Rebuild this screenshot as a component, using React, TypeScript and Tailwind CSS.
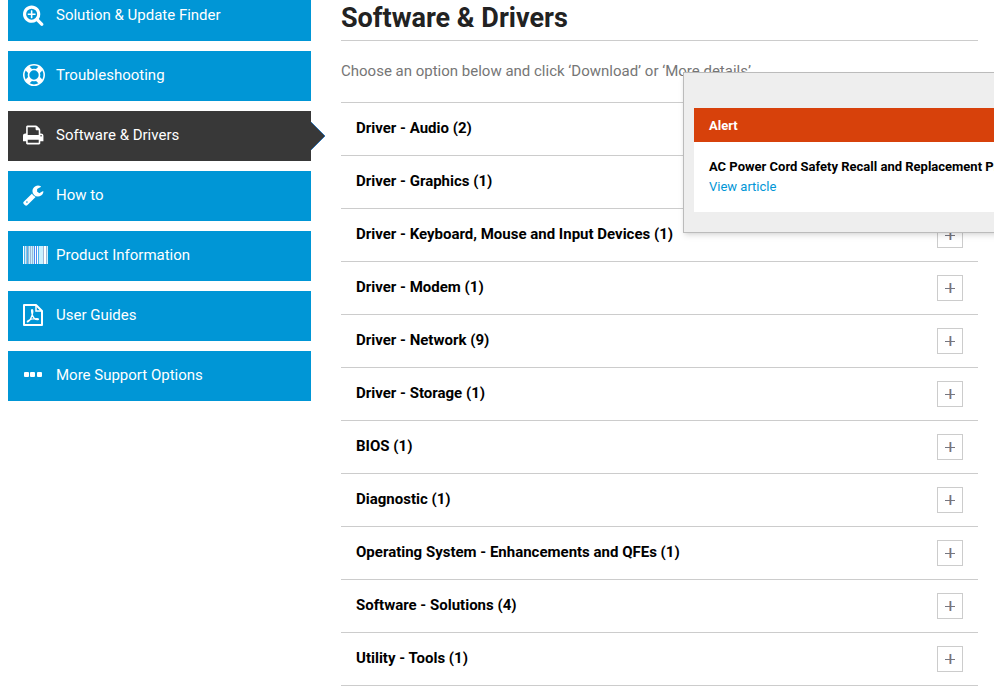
import React, { useState } from "react";

interface IconProps {
  viewBox?: string;
  d: string;
}

const Icon: React.FC<IconProps> = ({ viewBox = "64 0 1792 1792", d }) => (
  <svg viewBox={viewBox} className="size-[22px] fill-current" aria-hidden="true">
    <path d={d} />
  </svg>
);

const SearchPlusIcon = () => (
  <Icon d="M1088 800v64q0 13-9.500 22.500t-22.500 9.500h-224v224q0 13-9.500 22.500t-22.500 9.500h-64q-13 0-22.500-9.500t-9.500-22.500v-224h-224q-13 0-22.500-9.500t-9.500-22.500v-64q0-13 9.500-22.500t22.500-9.500h224v-224q0-13 9.500-22.500t22.500-9.500h64q13 0 22.500 9.500t9.500 22.500v224h224q13 0 22.500 9.500t9.500 22.500zm128 32q0-185-131.500-316.500t-316.500-131.500-316.500 131.500-131.500 316.500 131.500 316.500 316.500 131.500 316.500-131.500 131.500-316.500zm512 832q0 53-37.500 90.500t-90.500 37.500q-54 0-90-38l-343-342q-179 124-399 124-143 0-273.500-55.500t-225-150-150-225-55.500-273.500 55.500-273.500 150-225 225-150 273.500-55.500 273.500 55.500 225 150 150 225 55.500 273.500q0 220-124 399l343 343q37 37 37 90z" />
);

const LifeRingIcon = () => (
  <Icon
    viewBox="0 0 1792 1792"
    d="M896 0q182 0 348 71t286 191 191 286 71 348-71 348-191 286-286 191-348 71-348-71-286-191-191-286-71-348 71-348 191-286 286-191 348-71zm0 128q-190 0-361 90l194 194q82-28 167-28t167 28l194-194q-171-90-361-90zm-678 1129l194-194q-28-82-28-167t28-167l-194-194q-90 171-90 361t90 361zm678 407q190 0 361-90l-194-194q-82 28-167 28t-167-28l-194 194q171 90 361 90zm0-384q159 0 271.500-112.500t112.500-271.500-112.500-271.500-271.500-112.500-271.500 112.500-112.500 271.500 112.500 271.500 271.500 112.500zm484-217l194 194q90-171 90-361t-90-361l-194 194q28 82 28 167t-28 167z"
  />
);

const PrintIcon = () => (
  <Icon d="M448 1536h896v-256h-896v256zm0-640h896v-384h-160q-40 0-68-28t-28-68v-160h-640v640zm1152 64q0-26-19-45t-45-19-45 19-19 45 19 45 45 19 45-19 19-45zm128 0v416q0 13-9.500 22.500t-22.500 9.500h-224v160q0 40-28 68t-68 28h-960q-40 0-68-28t-28-68v-160h-224q-13 0-22.500-9.500t-9.500-22.500v-416q0-79 56.500-135.500t135.500-56.500h64v-544q0-40 28-68t68-28h672q40 0 88 20t76 48l152 152q28 28 48 76t20 88v256h64q79 0 135.500 56.500t56.500 135.500z" />
);

const WrenchIcon = () => (
  <Icon d="M448 1472q0-26-19-45t-45-19-45 19-19 45 19 45 45 19 45-19 19-45zm644-420l-682 682q-37 37-90 37-52 0-91-37l-106-108q-38-36-38-90 0-53 38-91l681-681q39 98 114.500 173.500t173.500 114.500zm634-435q0 39-23 106-47 134-164.500 217.500t-258.500 83.500q-185 0-316.500-131.500t-131.500-316.500 131.500-316.500 316.500-131.500q58 0 121.500 16.500t107.500 46.500q16 11 16 28t-16 28l-293 169v224l193 107q5-3 79-48.500t135.500-81 70.500-35.500q15 0 23.500 10t8.500 25z" />
);

const BarcodeIcon = () => (
  <svg viewBox="0 0 25 18" className="h-[18px] w-[25px]" shapeRendering="crispEdges" aria-hidden="true">
    <path fill="#c9f1ff" d="M0 0h25v18H0z" />
    <path fill="#ffffff" d="M0 0h1v18H0zM12 0h1v18H12zM14 0h1v18H14zM21 0h2v18H21z" />
    <path fill="#9fb9d6" d="M3 0h1v18H3zM5 0h1v18H5zM7 0h1v18H7zM9 0h1v18H9zM20 0h1v18H20zM23 0h1v18H23z" />
    <path fill="#4fb4ee" d="M1 0h1v18H1zM4 0h1v18H4zM15 0h1v18H15z" />
    <path fill="#4f8cf0" d="M11 0h1v18H11zM13 0h1v18H13z" />
  </svg>
);

const PdfIcon = () => (
  <svg viewBox="0 0 20 22" className="h-[22px] w-5" fill="none" stroke="currentColor" aria-hidden="true">
    <path d="M1 1h12l6 6v14H1z" strokeWidth="2" strokeLinejoin="round" />
    <path d="M13 1v6h6" strokeWidth="1.500" />
    <path
      d="M9 5.500c1.200 0 .9 2.500.4 4.500-.8 3-3 7-4.600 7.900-.7.300-.8-.5.200-1.200 2-1.400 5.500-2.200 9-2.200 1.800 0 2 1.200.4 1.200-2.200 0-4.300-2.200-5.200-5.200C8.600 8.500 8.200 5.500 9 5.500z"
      strokeWidth="1.200"
    />
  </svg>
);

const DotsIcon = () => (
  <svg viewBox="0 0 22 22" className="size-[22px] fill-current" aria-hidden="true">
    <rect x="1" y="8" width="5" height="5" rx="1" />
    <rect x="7" y="8" width="5" height="5" rx="1" />
    <rect x="14" y="8" width="5" height="5" rx="1" />
  </svg>
);

const navItems = [
  { label: "Solution & Update Finder", icon: <SearchPlusIcon /> },
  { label: "Troubleshooting", icon: <LifeRingIcon /> },
  { label: "Software & Drivers", icon: <PrintIcon />, active: true },
  { label: "How to", icon: <WrenchIcon /> },
  { label: "Product Information", icon: <BarcodeIcon /> },
  { label: "User Guides", icon: <PdfIcon /> },
  { label: "More Support Options", icon: <DotsIcon /> },
];

const categories = [
  { name: "Driver - Audio", count: 2 },
  { name: "Driver - Graphics", count: 1 },
  { name: "Driver - Keyboard, Mouse and Input Devices", count: 1 },
  { name: "Driver - Modem", count: 1 },
  { name: "Driver - Network", count: 9 },
  { name: "Driver - Storage", count: 1 },
  { name: "BIOS", count: 1 },
  { name: "Diagnostic", count: 1 },
  { name: "Operating System - Enhancements and QFEs", count: 1 },
  { name: "Software - Solutions", count: 4 },
  { name: "Utility - Tools", count: 1 },
];

const SideNav: React.FC = () => (
  <nav className="-mt-[9px] w-[303px] shrink-0">
    <ul className="flex flex-col gap-2.5">
      {navItems.map((item) => (
        <li key={item.label} className="relative">
          <a
            href="#"
            aria-current={item.active ? "page" : undefined}
            className={`flex h-[50px] items-center pb-0.5 pl-[15px] text-[15px] text-white ${
              item.active ? "bg-[#383838]" : "bg-[#0096d6]"
            }`}
          >
            <span className="w-[33px] shrink-0">{item.icon}</span>
            {item.label}
          </a>
          {item.active && (
            <svg
              viewBox="0 0 14 28"
              className="absolute top-[11px] left-full h-7 w-3.5"
              aria-hidden="true"
            >
              <path d="M0 0l14 14L0 28z" fill="#383838" />
              <path d="M0 0l14 14L0 28" fill="none" stroke="#2f74b5" strokeWidth="1" />
            </svg>
          )}
        </li>
      ))}
    </ul>
  </nav>
);

const CategoryList: React.FC = () => {
  const [open, setOpen] = useState<string | null>(null);

  return (
    <ul className="border-t border-[#cccccc]">
      {categories.map(({ name, count }) => (
        <li
          key={name}
          className="flex h-[53px] items-center justify-between border-b border-[#cccccc] px-[15px]"
        >
          <h2 className="pb-0.5 text-[15px] font-bold text-black">
            {name} ({count})
          </h2>
          <button
            type="button"
            aria-label={`Expand ${name}`}
            aria-expanded={open === name}
            onClick={() => setOpen(open === name ? null : name)}
            className="flex size-[26px] items-center justify-center border border-[#cccccc] bg-white"
          >
            <svg viewBox="0 0 12 12" className="size-3" shapeRendering="crispEdges" aria-hidden="true">
              <path d="M5 1h1v10H5z" fill="#d8b49c" />
              <path d="M7 1h1v10H7z" fill="#b4d2fa" />
              <path d="M1 6h10v1H1zM6 1h1v10H6z" fill="#76767f" />
            </svg>
          </button>
        </li>
      ))}
    </ul>
  );
};

const AlertPopup: React.FC = () => (
  <aside className="absolute top-[72px] left-[683px] w-[420px] border border-[#bbbbbb] bg-[#eeeeee] px-2.5 pt-[35px] pb-5 shadow-md">
    <h2 className="bg-[#d7410b] px-[15px] pt-2 pb-1.5 text-[13px] leading-5 font-bold text-white">
      Alert
    </h2>
    <div className="bg-white px-[15px] pt-[15px] pb-[15px] text-[13px] leading-5">
      <p className="font-bold whitespace-nowrap text-black">
        AC Power Cord Safety Recall and Replacement Program
      </p>
      <a href="#" className="text-[#0096d6]">
        View article
      </a>
    </div>
  </aside>
);

const App: React.FC = () => (
  <div className="relative flex min-h-screen gap-[30px] overflow-hidden bg-white pr-4 pl-2 font-[Roboto,sans-serif]">
    <SideNav />
    <main className="min-w-0 flex-1">
      <h1 className="border-b border-[#cccccc] pt-0.5 pb-1.5 text-[27px] leading-8 font-bold text-[#222222]">
        Software & Drivers
      </h1>
      <p className="pt-5 pb-[21px] text-[15px] leading-5 text-[#767676]">
        Choose an option below and click ‘Download’ or ‘More details’
      </p>
      <CategoryList />
    </main>
    <AlertPopup />
  </div>
);

export default App;
